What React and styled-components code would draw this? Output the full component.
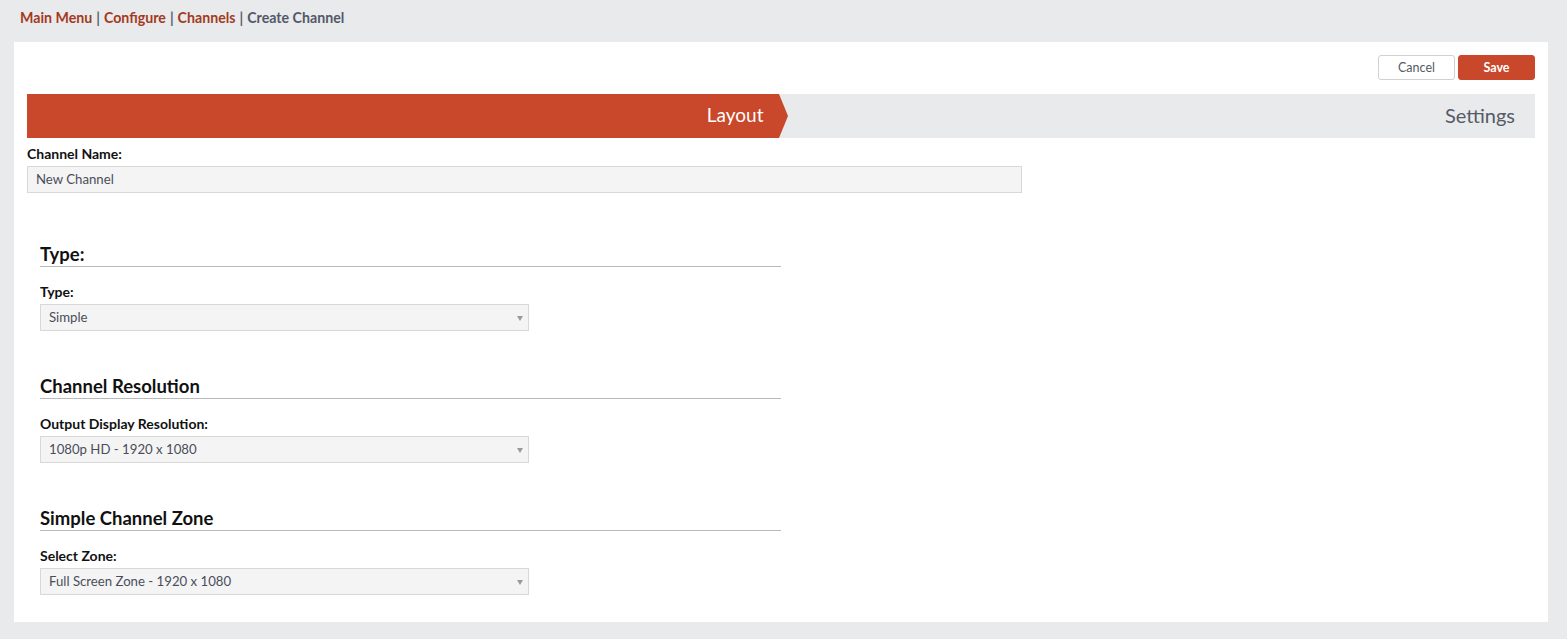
import React from "react";
import styled, { createGlobalStyle } from "styled-components";

const Global = createGlobalStyle`
  html, body { margin: 0; padding: 0; background: #e9eaec; }
  body { font-family: Lato, "Noto Sans", "Liberation Sans", sans-serif; color: #1d1d1f; }
  * { box-sizing: border-box; }
`;

const Page = styled.div`
  padding: 0 19px 18px 14px;
  min-height: 639px;
`;

const Crumbs = styled.nav`
  height: 42px;
  display: flex;
  align-items: center;
  padding: 0 0 7px 6px;
  font-size: 14.2px;
  font-weight: 700;
  color: #5b6072;
  gap: 4px;
`;

const Crumb = styled.a`
  color: ${p => (p.$current ? "#535869" : "#a33a1f")};
  text-decoration: none;
`;

const Card = styled.main`
  background: #fff;
  padding: 13px 13px 27px 13px;
`;

const Actions = styled.div`
  display: flex;
  justify-content: flex-end;
  gap: 3px;
  margin-bottom: 14px;
`;

const Button = styled.button`
  width: 77px;
  height: 25px;
  border-radius: 3px;
  font-family: inherit;
  font-size: 12.5px;
  font-weight: ${p => (p.$primary ? 700 : 400)};
  border: 1px solid ${p => (p.$primary ? "#c9472a" : "#cfd1d4")};
  background: ${p => (p.$primary ? "#c9472a" : "#fff")};
  color: ${p => (p.$primary ? "#fff" : "#555a66")};
  cursor: pointer;
`;

const Steps = styled.div`
  display: flex;
  height: 44px;
  background: #e9eaec;
`;

const Step = styled.div`
  position: relative;
  flex: 1;
  display: flex;
  align-items: center;
  justify-content: flex-end;
  padding-right: ${p => (p.$active ? "15px" : "20px")};
  padding-bottom: 3px;
  font-size: ${p => (p.$active ? "19px" : "20px")};
  color: ${p => (p.$active ? "#fff" : "#555a68")};
  background: ${p => (p.$active ? "#c9472a" : "transparent")};
  ${p =>
    p.$active &&
    `
    &::after {
      content: "";
      position: absolute;
      right: -9px;
      top: 0;
      border-top: 22px solid transparent;
      border-bottom: 22px solid transparent;
      border-left: 9px solid #c9472a;
    }
  `}
`;

const Field = styled.div`
  display: flex;
  flex-direction: column;
`;

const Label = styled.label`
  font-size: 14px;
  font-weight: 700;
  color: #111;
  height: ${p => (p.$spaced ? "37px" : "28px")};
  padding-top: ${p => (p.$spaced ? "11px" : "3px")};
  display: flex;
  align-items: center;
`;

const TextInput = styled.div`
  width: ${p => p.$width}px;
  height: 27px;
  background: #f4f4f4;
  border: 1px solid #d8d8d8;
  display: flex;
  align-items: center;
  padding: 0 8px 2px;
  font-size: 13.2px;
  color: #4a4e5a;
  position: relative;
`;

const Caret = styled.span`
  position: absolute;
  right: 5px;
  top: 11px;
  border-left: 3px solid transparent;
  border-right: 3px solid transparent;
  border-top: 5px solid #9a9a9a;
`;

const Section = styled.section`
  margin: 48px 0 0 13px;
  width: 741px;

  & + & {
    margin-top: 42px;
  }
`;

const SectionTitle = styled.h3`
  margin: 0;
  font-size: 18.5px;
  font-weight: 700;
  height: 26px;
  line-height: 26px;
  border-bottom: 1px solid #b9b9b9;
  color: #111;
`;

const Select = ({ value }) => (
  <TextInput $width={489}>
    {value}
    <Caret />
  </TextInput>
);

const sections = [
  { title: "Type:", label: "Type:", value: "Simple" },
  { title: "Channel Resolution", label: "Output Display Resolution:", value: "1080p HD - 1920 x 1080" },
  { title: "Simple Channel Zone", label: "Select Zone:", value: "Full Screen Zone - 1920 x 1080" },
];

export default function App() {
  return (
    <>
      <Global />
      <Page>
        <Crumbs>
          <Crumb href="#">Main Menu</Crumb> |
          <Crumb href="#">Configure</Crumb> |
          <Crumb href="#">Channels</Crumb> |
          <Crumb $current>Create Channel</Crumb>
        </Crumbs>
        <Card>
          <Actions>
            <Button>Cancel</Button>
            <Button $primary>Save</Button>
          </Actions>
          <Steps>
            <Step $active>Layout</Step>
            <Step>Settings</Step>
          </Steps>
          <Field>
            <Label>Channel Name:</Label>
            <TextInput $width={995}>New Channel</TextInput>
          </Field>
          {sections.map(s => (
            <Section key={s.title}>
              <SectionTitle>{s.title}</SectionTitle>
              <Field>
                <Label $spaced>{s.label}</Label>
                <Select value={s.value} />
              </Field>
            </Section>
          ))}
        </Card>
      </Page>
    </>
  );
}
